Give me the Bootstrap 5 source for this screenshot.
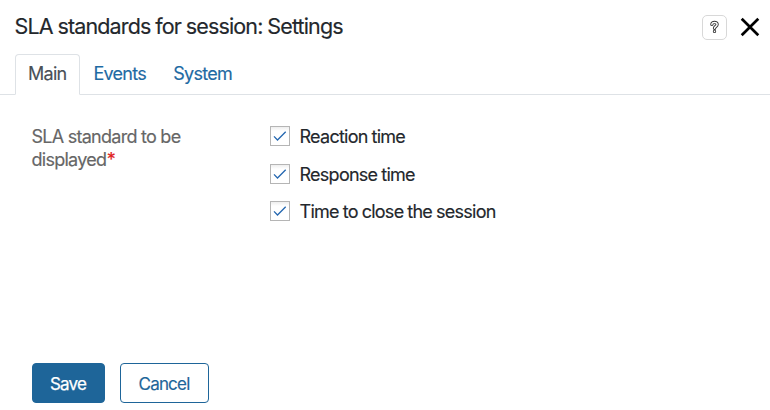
<!DOCTYPE html>
<html lang="en">
<head>
<meta charset="utf-8">
<meta name="viewport" content="width=device-width, initial-scale=1">
<title>SLA standards for session: Settings</title>
<link href="https://cdn.jsdelivr.net/npm/bootstrap@5.3.0/dist/css/bootstrap.min.css" rel="stylesheet">
<style>
body{font-family:Inter,"Liberation Sans",sans-serif;font-size:18px;line-height:23px;letter-spacing:-.74px;color:#23272c;height:410px;overflow:hidden;-webkit-text-stroke:.15px}
.dialog-head{height:54px;padding:0 10px 0 14.5px}
.dialog-title{font-size:21.5px;line-height:26px;font-weight:400;letter-spacing:-.86px;word-spacing:-.4px;white-space:nowrap;padding-bottom:2px}
.head-tools{gap:13px}
.help-btn{width:25px;height:25px;border:1px solid #d8d8d8;border-radius:5px;background:#fff}
.close-btn{width:20px;height:20px;border:0;background:none}
.tabs{padding-left:15px;height:41px;--bs-nav-link-color:#1e6aa3;--bs-nav-link-padding-x:12.6px;--bs-nav-link-padding-y:7px;--bs-nav-tabs-border-radius:4px;--bs-nav-tabs-link-active-color:#495057;letter-spacing:-.72px}
.tabs .nav-link{height:41px;line-height:24px}
.tabs .nav-link.active{padding-left:12px;padding-right:12.3px}
.form-area{padding:30px 32px 0 31.5px;height:268px}
.label-col{width:238.5px;padding-right:60px;color:#666}
.req{color:#e02020;margin-left:.4px}
.tick-box{width:20px;height:20px;margin-top:1px;border:1px solid #b5b5b5;background:linear-gradient(#eee,#fff 4px)}
.option{height:37.5px;gap:9.5px;word-spacing:-.4px}
.action{height:40px;border-radius:4px;font-size:17px;line-height:24px;letter-spacing:-.8px;padding:8px 1px 6px 0;--bs-btn-border-color:#1e6599}
.save{width:73px;--bs-btn-bg:#1e6599;--bs-btn-color:#fff;-webkit-text-stroke:.25px}
.cancel{width:89px;--bs-btn-bg:#fff;--bs-btn-color:#1e6599}
.actions{gap:15px}
</style>
</head>
<body class="bg-white">
<header class="dialog-head d-flex align-items-center justify-content-between">
  <h1 class="dialog-title m-0">SLA standards for session: Settings</h1>
  <div class="head-tools d-flex align-items-center">
    <button class="help-btn d-flex align-items-center justify-content-center p-0" aria-label="Help">
      <svg width="11" height="15" viewBox="0 0 11 15" fill="none" stroke-linecap="round" stroke-linejoin="round"><path d="M2.9 4.4C2.8 1.8 8.2 1.8 8.1 4.5C8 6.4 5.6 6.4 5.5 8.3M5.5 11.3v.1" stroke="#333" stroke-width="3.3"/><path d="M2.9 4.4C2.8 1.8 8.2 1.8 8.1 4.5C8 6.4 5.6 6.4 5.5 8.3M5.5 11.3v.1" stroke="#fff" stroke-width="1.5"/></svg>
    </button>
    <button class="close-btn p-0 d-flex" aria-label="Close">
      <svg width="20" height="20" viewBox="0 0 20 20"><path d="M1.7 1.7l16.6 16.6M18.3 1.7L1.7 18.3" stroke="#000" stroke-width="2.7"/></svg>
    </button>
  </div>
</header>
<ul class="nav nav-tabs tabs flex-nowrap">
  <li class="nav-item"><a class="nav-link active" href="#">Main</a></li>
  <li class="nav-item"><a class="nav-link" href="#">Events</a></li>
  <li class="nav-item"><a class="nav-link" href="#">System</a></li>
</ul>
<main class="form-area d-flex">
  <div class="label-col">SLA standard to be displayed<span class="req">*</span></div>
  <div>
    <div class="option d-flex align-items-start"><span class="tick-box d-flex"><svg width="18" height="18" viewBox="0 0 18 18" fill="none"><path d="M3 9.4l3.5 3.6L14.7 4.8" stroke="#2467b0" stroke-width="1.3"/></svg></span><span>Reaction time</span></div>
    <div class="option d-flex align-items-start"><span class="tick-box d-flex"><svg width="18" height="18" viewBox="0 0 18 18" fill="none"><path d="M3 9.4l3.5 3.6L14.7 4.8" stroke="#2467b0" stroke-width="1.3"/></svg></span><span>Response time</span></div>
    <div class="option d-flex align-items-start"><span class="tick-box d-flex"><svg width="18" height="18" viewBox="0 0 18 18" fill="none"><path d="M3 9.4l3.5 3.6L14.7 4.8" stroke="#2467b0" stroke-width="1.3"/></svg></span><span>Time to close the session</span></div>
  </div>
</main>
<footer class="actions d-flex px-4 mx-2">
  <button class="btn action save">Save</button>
  <button class="btn action cancel">Cancel</button>
</footer>
</body>
</html>
